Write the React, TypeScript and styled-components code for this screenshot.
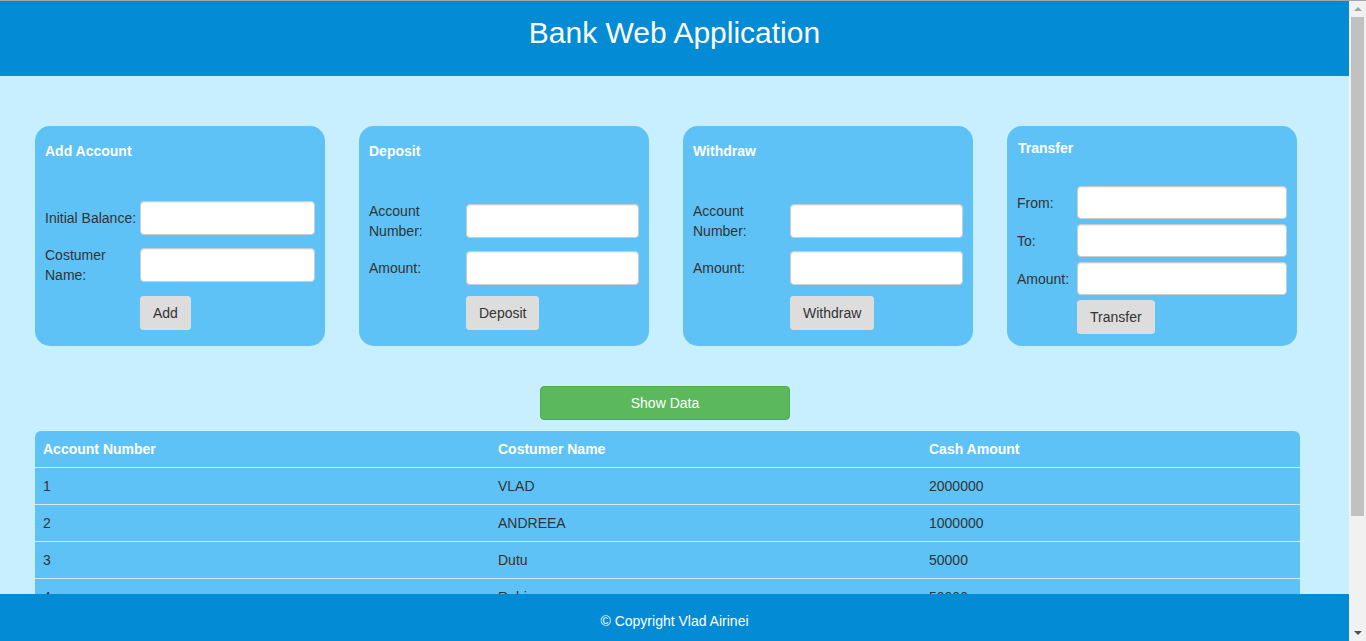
import React from "react";
import styled, { createGlobalStyle } from "styled-components";

const GlobalStyle = createGlobalStyle`
  html, body {
    margin: 0;
    padding: 0;
    overflow: hidden;
    height: 100%;
  }
  body {
    font-family: "Liberation Sans", Arial, Helvetica, sans-serif;
    font-size: 14px;
    line-height: 20px;
    color: #333;
  }
  * { box-sizing: border-box; }
`;

const Shell = styled.div`
  display: flex;
  height: 641px;
  width: 1366px;
  border-top: 1px solid #a6a6a6;
`;

const Viewport = styled.div`
  flex: 1;
  display: flex;
  flex-direction: column;
  overflow: hidden;
  background: #c8efff;
`;

const Header = styled.header`
  flex: 0 0 75px;
  background: #038bd5;
  padding-top: 15px;
  text-align: center;
`;

const Title = styled.h1`
  margin: 0;
  font-size: 30px;
  line-height: 34px;
  font-weight: normal;
  color: #fff;
`;

const Main = styled.main`
  flex: 1;
  overflow: hidden;
  padding: 50px 0 0 35px;
`;

const Container = styled.div`
  width: 1265px;
  display: flex;
  flex-direction: column;
`;

const CardRow = styled.div`
  display: flex;
  gap: 34px;
`;

const Card = styled.section<{ $top: number }>`
  width: 290px;
  height: 220px;
  background: #5ec2f6;
  border-radius: 15px;
  padding: ${(p) => p.$top}px 10px 0 10px;
`;

const CardTitle = styled.h3<{ $indent?: number }>`
  margin: 0;
  padding-left: ${(p) => p.$indent ?? 0}px;
  font-size: 14px;
  line-height: 20px;
  font-weight: bold;
  color: #fff;
`;

const Form = styled.div<{ $label: number; $gap: number; $offset: number }>`
  display: grid;
  grid-template-columns: ${(p) => p.$label}px 1fr;
  row-gap: ${(p) => p.$gap}px;
  align-items: center;
  margin-top: ${(p) => p.$offset}px;
`;

const Label = styled.label`
  font-size: 14px;
  line-height: 20px;
  color: #333;
`;

const Input = styled.input<{ $h: number }>`
  display: block;
  width: 100%;
  height: ${(p) => p.$h}px;
  border: 1px solid #ccc;
  border-radius: 4px;
  background: #fff;
  box-shadow: inset 0 1px 1px rgba(0, 0, 0, 0.075);
  padding: 6px 12px;
  font: inherit;
`;

const Button = styled.button<{ $shift?: number }>`
  grid-column: 2;
  justify-self: start;
  margin-top: ${(p) => p.$shift ?? 0}px;
  height: 34px;
  padding: 6px 12px;
  font-family: "Liberation Sans", Arial, sans-serif;
  font-size: 14px;
  line-height: 20px;
  color: #333;
  background: #ddd;
  border: 1px solid #ddd;
  border-radius: 3px;
`;

const ShowButton = styled.button`
  align-self: center;
  margin: 40px 0 0 -5px;
  width: 250px;
  height: 34px;
  font-family: "Liberation Sans", Arial, sans-serif;
  font-size: 14px;
  line-height: 20px;
  color: #fff;
  background: #5cb85c;
  border: 1px solid #4cae4c;
  border-radius: 4px;
`;

const TableWrap = styled.div`
  margin-top: 11px;
  border-radius: 6px 6px 0 0;
  overflow: hidden;
  background: #5ec2f6;
`;

const Table = styled.table`
  width: 1265px;
  border-collapse: collapse;
  table-layout: fixed;
`;

const Th = styled.th`
  text-align: left;
  padding: 8px;
  height: 36px;
  font-size: 14px;
  line-height: 20px;
  font-weight: bold;
  color: #fff;
`;

const Td = styled.td`
  padding: 8px;
  height: 37px;
  font-size: 14px;
  line-height: 20px;
  color: #333;
  border-top: 1px solid #dde6ea;
`;

const Footer = styled.footer`
  flex: 0 0 47px;
  background: #038bd5;
  padding-top: 17px;
  text-align: center;
  color: #fff;
  font-size: 14px;
  line-height: 20px;
`;

const ScrollBar = styled.div`
  flex: 0 0 17px;
  display: flex;
  flex-direction: column;
  align-items: center;
  background: #f1f1f1;
`;

const Arrow = styled.div<{ $dir: "up" | "down" }>`
  flex: 0 0 16px;
  display: flex;
  align-items: center;
  justify-content: center;
  &::before {
    content: "";
    width: 0;
    height: 0;
    border-left: 4px solid transparent;
    border-right: 4px solid transparent;
    ${(p) =>
      p.$dir === "up"
        ? "border-bottom: 4px solid #a3a3a3;"
        : "border-top: 4px solid #505050;"}
  }
`;

const Track = styled.div`
  flex: 1;
  width: 100%;
  display: flex;
  justify-content: center;
`;

const Thumb = styled.div`
  width: 13px;
  height: 499px;
  background: #c1c1c1;
`;

const rows = [
  ["1", "VLAD", "2000000"],
  ["2", "ANDREEA", "1000000"],
  ["3", "Dutu", "50000"],
  ["4", "Rubi", "50000"],
];

export default function App() {
  return (
    <>
      <GlobalStyle />
      <Shell>
        <Viewport>
          <Header>
            <Title>Bank Web Application</Title>
          </Header>
          <Main>
            <Container>
              <CardRow>
                <Card $top={15}>
                  <CardTitle>Add Account</CardTitle>
                  <Form $label={95} $gap={10} $offset={40}>
                    <Label>Initial Balance:</Label>
                    <Input $h={34} />
                    <Label>Costumer Name:</Label>
                    <Input $h={34} />
                    <Button $shift={1}>Add</Button>
                  </Form>
                </Card>
                <Card $top={15}>
                  <CardTitle>Deposit</CardTitle>
                  <Form $label={97} $gap={10} $offset={40}>
                    <Label>Account Number:</Label>
                    <Input $h={34} />
                    <Label>Amount:</Label>
                    <Input $h={34} />
                    <Button $shift={1}>Deposit</Button>
                  </Form>
                </Card>
                <Card $top={15}>
                  <CardTitle>Withdraw</CardTitle>
                  <Form $label={97} $gap={10} $offset={40}>
                    <Label>Account Number:</Label>
                    <Input $h={34} />
                    <Label>Amount:</Label>
                    <Input $h={34} />
                    <Button $shift={1}>Withdraw</Button>
                  </Form>
                </Card>
                <Card $top={12}>
                  <CardTitle $indent={1}>Transfer</CardTitle>
                  <Form $label={60} $gap={5} $offset={28}>
                    <Label>From:</Label>
                    <Input $h={33} />
                    <Label>To:</Label>
                    <Input $h={33} />
                    <Label>Amount:</Label>
                    <Input $h={33} />
                    <Button>Transfer</Button>
                  </Form>
                </Card>
              </CardRow>
              <ShowButton>Show Data</ShowButton>
              <TableWrap>
                <Table>
                  <colgroup>
                    <col style={{ width: 455 }} />
                    <col style={{ width: 431 }} />
                    <col />
                  </colgroup>
                  <thead>
                    <tr>
                      <Th>Account Number</Th>
                      <Th>Costumer Name</Th>
                      <Th>Cash Amount</Th>
                    </tr>
                  </thead>
                  <tbody>
                    {rows.map((r) => (
                      <tr key={r[0]}>
                        <Td>{r[0]}</Td>
                        <Td>{r[1]}</Td>
                        <Td>{r[2]}</Td>
                      </tr>
                    ))}
                  </tbody>
                </Table>
              </TableWrap>
            </Container>
          </Main>
          <Footer>© Copyright Vlad Airinei</Footer>
        </Viewport>
        <ScrollBar>
          <Arrow $dir="up" />
          <Track>
            <Thumb />
          </Track>
          <Arrow $dir="down" />
        </ScrollBar>
      </Shell>
    </>
  );
}
